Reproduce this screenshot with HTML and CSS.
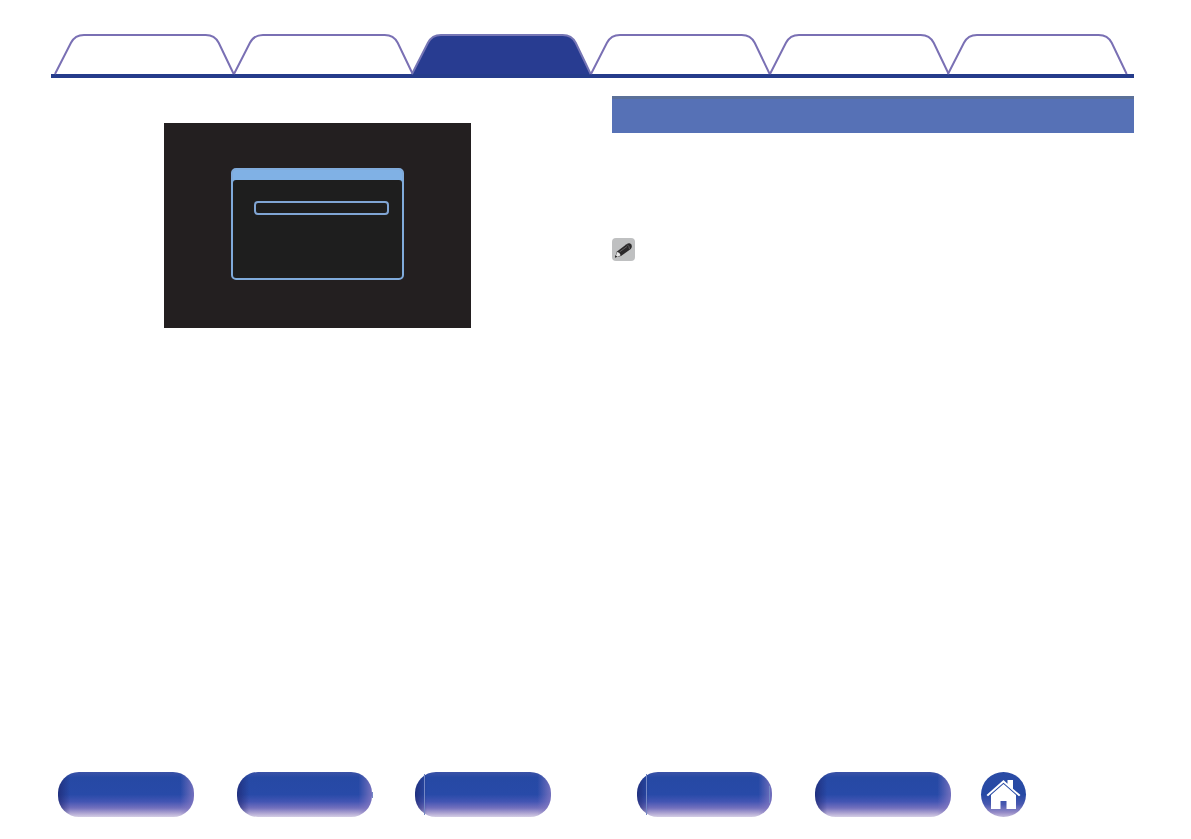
FILE: index.html
```
<!DOCTYPE html>
<html lang="en">
<head>
    <meta charset="UTF-8">
    <meta name="viewport" content="width=device-width, initial-scale=1.0">
    <title>Manual</title>
    <link rel="stylesheet" href="styles.css">
</head>
<body>

<nav class="tabs" aria-label="Chapters">
    <a class="tab" href="#chapter-1" aria-label="Chapter 1">
        <svg viewBox="0 0 179 41" preserveAspectRatio="none"><path d="M0 41 L16 9 Q20 1 29 1 H151 Q160 1 164 9 L179 41"/></svg>
    </a>
    <a class="tab" href="#chapter-2" aria-label="Chapter 2">
        <svg viewBox="0 0 179 41" preserveAspectRatio="none"><path d="M0 41 L16 9 Q20 1 29 1 H151 Q160 1 164 9 L179 41"/></svg>
    </a>
    <a class="tab active" href="#chapter-3" aria-label="Chapter 3" aria-current="page">
        <svg viewBox="0 0 179 41" preserveAspectRatio="none"><path d="M0 41 L16 9 Q20 1 29 1 H151 Q160 1 164 9 L179 41"/></svg>
    </a>
    <a class="tab" href="#chapter-4" aria-label="Chapter 4">
        <svg viewBox="0 0 179 41" preserveAspectRatio="none"><path d="M0 41 L16 9 Q20 1 29 1 H151 Q160 1 164 9 L179 41"/></svg>
    </a>
    <a class="tab" href="#chapter-5" aria-label="Chapter 5">
        <svg viewBox="0 0 179 41" preserveAspectRatio="none"><path d="M0 41 L16 9 Q20 1 29 1 H151 Q160 1 164 9 L179 41"/></svg>
    </a>
    <a class="tab" href="#chapter-6" aria-label="Chapter 6">
        <svg viewBox="0 0 179 41" preserveAspectRatio="none"><path d="M0 41 L16 9 Q20 1 29 1 H151 Q160 1 164 9 L179 41"/></svg>
    </a>
</nav>

<main class="content">
    <section class="column">
        <div class="screen">
            <div class="dialog">
                <div class="dialog-title"></div>
                <div class="dialog-body">
                    <button class="dialog-option" type="button" aria-label="Selected option"></button>
                </div>
            </div>
        </div>
    </section>

    <section class="column">
        <div class="section-bar"></div>
        <div class="note">
            <svg class="note-icon" viewBox="0 0 23 23">
                <rect width="23" height="23" rx="4" fill="#bfc0c1"/>
                <path d="M3 19.500 L5 13.500 L14.500 6.200 Q17.500 4 19.300 6.500 Q20.500 9 18.800 11 L9 18 Z" fill="#2b292a"/>
                <path d="M3.800 18 L5.200 14 Q8.200 14.500 8.500 17.500 L4.800 18.900 Z" fill="#e4e4e4"/>
                <path d="M3 19.500 L3.700 17.300 L5.200 18.800 Z" fill="#1c1a1b"/>
                <path d="M7.500 14 L15 8.500 M15 6.500 Q17.500 8 17.500 11" fill="none" stroke="#858585" stroke-width=".6"/>
            </svg>
        </div>
    </section>
</main>

<footer class="bottom-nav">
    <button class="pill" type="button" aria-label="Shortcut 1"></button>
    <button class="pill nub" type="button" aria-label="Shortcut 2"></button>
    <button class="pill seam-left" type="button" aria-label="Shortcut 3"></button>
    <button class="pill seam-left seam-right second-group" type="button" aria-label="Shortcut 4"></button>
    <button class="pill" type="button" aria-label="Shortcut 5"></button>
    <a class="home" href="#home" aria-label="Home">
        <svg viewBox="0 0 45 45">
            <path d="M22.500 8 L26.500 11.700 V8 H32 V16.800 L39.500 23 L38 24.300 L22.500 10.800 L7 24.300 L5.500 23 Z" fill="#fff"/>
            <path d="M22.500 12 L35 23 V37 H25.500 V29 H19.500 V37 H10 V23 Z" fill="#fff"/>
        </svg>
    </a>
</footer>

</body>
</html>
```

FILE: styles.css
```
* {
    box-sizing: border-box;
}

body {
    display: flex;
    flex-direction: column;
    min-height: 100vh;
    margin: 0;
    padding: 34px 57px 22px 51px;
    background-color: #fff;
    font-family: "Liberation Sans", Arial, sans-serif;
}

button {
    padding: 0;
    border: none;
    cursor: pointer;
}

/* Tabs */
.tabs {
    display: flex;
    padding: 0 7px 0 4px;
    border-bottom: 4px solid #253c8b;
}

.tab {
    flex: 1;
    height: 40px;
}

.tab svg {
    display: block;
    width: 100%;
    height: 100%;
    overflow: visible;
}

.tab path {
    fill: #fff;
    stroke: #7a70b4;
    stroke-width: 2px;
    vector-effect: non-scaling-stroke;
}

.tab.active path {
    fill: #283c91;
    stroke: #7676b5;
}

/* Content */
.content {
    display: grid;
    grid-template-columns: 1fr 1fr;
    gap: 39px;
    flex: 1;
    padding-top: 18px;
}

.screen {
    width: 307px;
    max-width: 100%;
    margin: 27px auto 0 113px;
    padding: 45px 67px 48px;
    background-color: #231f20;
}

.dialog {
    border: 2px solid #80abdb;
    border-radius: 5px;
    background-color: #80b1e5;
}

.dialog-title {
    height: 10px;
}

.dialog-body {
    height: 98px;
    padding: 21px 13px 0 21px;
    border-radius: 3px;
    background-color: #1e1e1e;
}

.dialog-option {
    display: block;
    width: 100%;
    height: 14px;
    border: 2px solid #80a5d4;
    border-radius: 4px;
    background-color: #1e1e1e;
}

.section-bar {
    height: 37px;
    border-top: 3px solid #5b7099;
    background-color: #5671b6;
}

.note {
    margin-top: 105px;
}

.note-icon {
    display: block;
    width: 23px;
    height: 23px;
}

/* Bottom navigation */
.bottom-nav {
    display: flex;
    gap: 43px;
    padding: 0 108px 0 7px;
}

.pill {
    position: relative;
    flex: 1;
    height: 45px;
    border-radius: 21px;
    background:
        linear-gradient(90deg, rgba(30, 38, 110, 0.7) 0, rgba(30, 38, 110, 0) 9%, rgba(135, 122, 195, 0) 90%, rgba(135, 122, 195, 0.8) 100%),
        linear-gradient(#3b52a7 0, #2649a4 12%, #284aa8 50%, #4355b3 66%, #7370bd 80%, #b0a7d3 92%, #d5cee5 100%);
}

.pill.second-group {
    margin-left: 43px;
}

.seam-left::before,
.seam-right::after,
.nub::after {
    content: "";
    position: absolute;
    top: 2px;
    bottom: 2px;
    width: 1px;
    background-color: #7488c5;
}

.seam-left::before {
    left: 9px;
}

.seam-right::after {
    right: 2px;
    top: 14px;
    bottom: 14px;
}

.nub::after {
    right: -1px;
    top: 20px;
    bottom: 19px;
}

.home {
    width: 45px;
    height: 45px;
    margin-left: -13px;
    border-radius: 50%;
    background: linear-gradient(#2a4ba5 0, #2649a4 50%, #4858b0 72%, #958bc7 90%, #c5bddd 100%);
}

.home svg {
    display: block;
}
```
